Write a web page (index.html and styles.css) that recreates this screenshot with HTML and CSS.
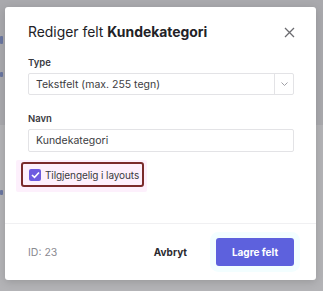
FILE: index.html
```html
<!doctype html>
<html lang="no">
  <head>
    <meta charset="UTF-8" />
    <meta name="viewport" content="width=device-width, initial-scale=1.0" />
    <title>Rediger felt</title>
    <link rel="stylesheet" href="styles.css">
  </head>
  <body>
    <div class="backdrop">
      <span class="ghost ghost-1"></span>
      <span class="ghost ghost-2"></span>
      <span class="ghost ghost-3"></span>
    </div>
    <div class="modal">
      <div class="modal-header">
        <h1>Rediger felt <strong>Kundekategori</strong></h1>
        <button class="close" aria-label="Lukk">
          <svg width="11" height="11" viewBox="0 0 11 11">
            <path d="M1 1 L10 10 M10 1 L1 10" stroke="#6b6b6f" stroke-width="1.3" fill="none" />
          </svg>
        </button>
      </div>
      <div class="modal-body">
        <label class="field-label">Type</label>
        <div class="select">
          <span class="select-value">Tekstfelt (max. 255 tegn)</span>
          <span class="select-arrow">
            <svg width="9" height="6" viewBox="0 0 9 6">
              <path d="M1.5 1.5 L4.5 4.5 L7.5 1.5" stroke="#a0a0a6" stroke-width="1" fill="none" />
            </svg>
          </span>
        </div>
        <label class="field-label">Navn</label>
        <div class="input">Kundekategori</div>
        <div class="check-wrap">
          <label class="check">
            <span class="checkbox">
              <svg width="9" height="8" viewBox="0 0 9 8">
                <path d="M1 4 L3.5 6.3 L8 1.5" stroke="#fff" stroke-width="1.6" fill="none" />
              </svg>
            </span>
            Tilgjengelig i layouts
          </label>
        </div>
      </div>
      <div class="modal-footer">
        <span class="field-id">ID: 23</span>
        <button class="btn-cancel">Avbryt</button>
        <button class="btn-save">Lagre felt</button>
      </div>
    </div>
  </body>
</html>
```

FILE: styles.css
```css
body {
  margin: 0;
  width: 323px;
  height: 291px;
  overflow: hidden;
  background-color: #acacb0;
  font-family: Inter, "Noto Sans", sans-serif;
  color: #27272b;
  position: relative;
}
.backdrop {
  position: absolute;
  inset: 0;
  background: linear-gradient(to bottom, #a9a9ad 0, #a9a9ad 125px, #b3b3b6 125px);
}
.ghost {
  position: absolute;
  left: 0;
  width: 3px;
  height: 5px;
  background: #6a76a0;
  border-radius: 1px;
}
.ghost-1 {
  top: 36px;
  height: 8px;
}
.ghost-2 {
  top: 72px;
}
.ghost-3 {
  top: 190px;
}
.modal {
  position: absolute;
  left: 5px;
  top: 7px;
  width: 311px;
  height: 273px;
  background: white;
  border-radius: 3px;
  box-shadow: 0 2px 8px rgba(0, 0, 0, 0.15);
  display: flex;
  flex-direction: column;
}
.modal-header {
  display: flex;
  align-items: center;
  justify-content: space-between;
  padding: 15px 21px 0 23px;
  height: 20px;
}
.modal-header h1 {
  margin: 0;
  font-size: 13.9px;
  font-weight: 400;
  color: #222226;
}
.modal-header strong {
  font-weight: 700;
}
.close {
  border: none;
  background: none;
  padding: 0;
  width: 11px;
  height: 11px;
  display: flex;
}
.modal-body {
  padding: 11px 22px 0 23px;
  flex: 1;
}
.field-label {
  display: block;
  font-size: 9.5px;
  font-weight: 600;
  color: #3a3a3f;
  margin: 4px 0 5px;
}
.select,
.input {
  box-sizing: border-box;
  height: 22px;
  border: 1px solid #e3e3e6;
  border-radius: 2px;
  font-size: 10.5px;
  color: #3c3c41;
  display: flex;
  align-items: center;
  padding-left: 7px;
}
.select {
  justify-content: space-between;
  padding-right: 0;
  margin-bottom: 18px;
}
.select-arrow {
  width: 18px;
  height: 100%;
  border-left: 1px solid #e3e3e6;
  display: flex;
  align-items: center;
  justify-content: center;
}
.input {
  height: 23px;
}
.check-wrap {
  display: inline-block;
  margin: 8px 0 0 -12px;
  padding: 2px 3px 5px 5px;
  background: #fdf0fc;
  border-radius: 2px;
}
.check {
  display: flex;
  align-items: center;
  gap: 4px;
  height: 21px;
  padding: 0 3px 0 6px;
  border: 2px solid #7a2b2b;
  border-radius: 3px;
  font-size: 10px;
  letter-spacing: -0.1px;
  color: #3a3a40;
  white-space: nowrap;
}
.checkbox {
  width: 12px;
  height: 12px;
  background: #6e5ce0;
  border-radius: 2px;
  display: flex;
  align-items: center;
  justify-content: center;
}
.modal-footer {
  border-top: 1px solid #f0f0f2;
  height: 56px;
  display: flex;
  align-items: center;
  padding: 0 22px 0 23px;
}
.field-id {
  font-size: 10.5px;
  color: #8a8a90;
  flex: 1;
}
.btn-cancel {
  border: none;
  background: none;
  font-family: inherit;
  font-size: 10px;
  font-weight: 700;
  color: #2a2a2f;
  padding: 0;
  margin-right: 29px;
}
.btn-save {
  border: none;
  width: 78px;
  height: 28px;
  border-radius: 3px;
  background: #5d61dd;
  color: white;
  font-family: inherit;
  font-size: 10px;
  font-weight: 700;
  box-shadow: 0 0 0 6px #f3feff;
}
```
